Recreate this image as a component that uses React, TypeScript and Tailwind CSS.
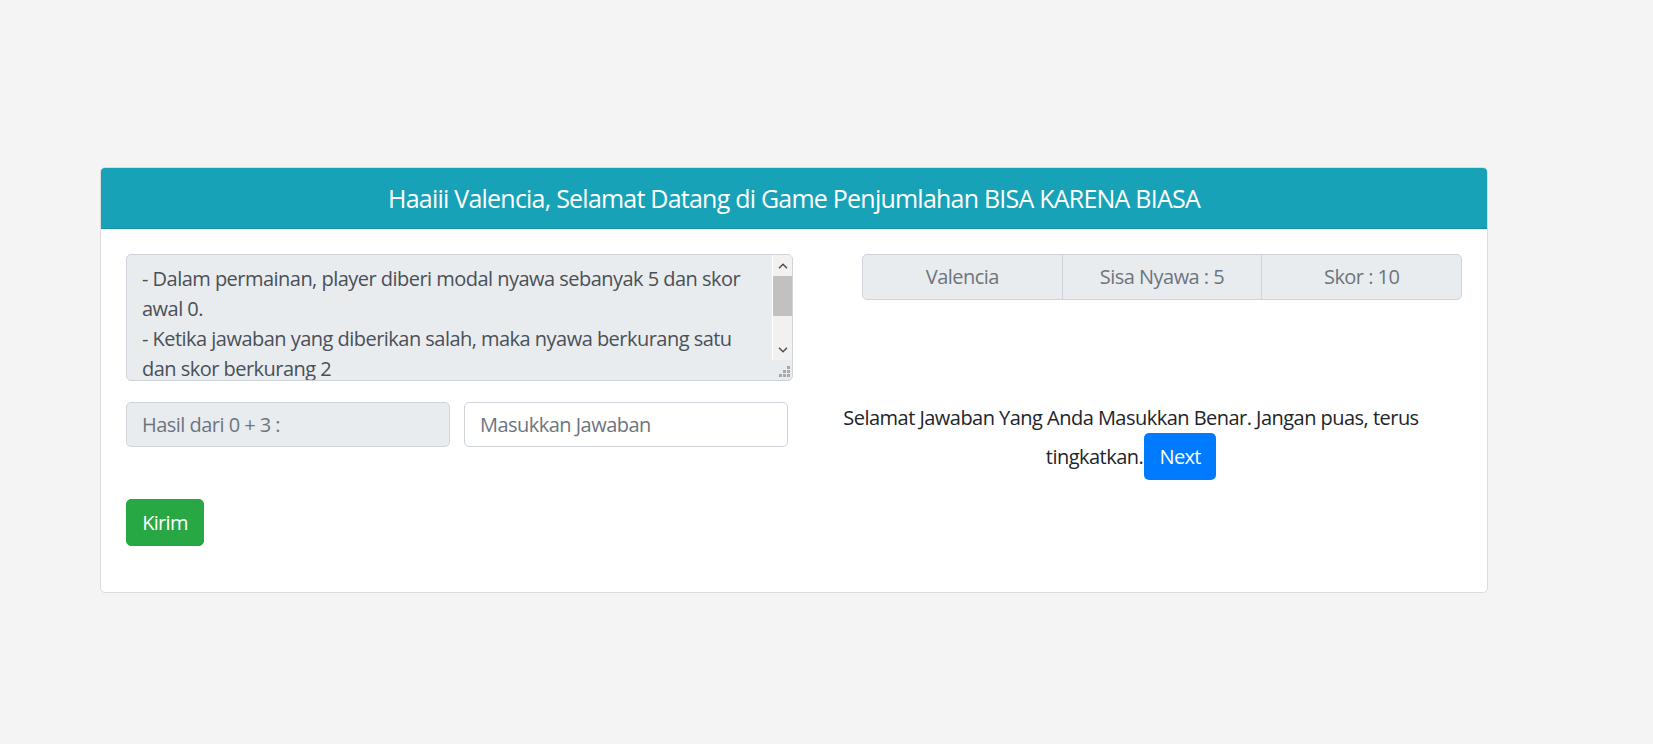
import React from "react";

const font = { fontFamily: '"Open Sans", "Noto Sans", sans-serif' };

function Scrollbar() {
  return (
    <div className="flex w-[20px] shrink-0 flex-col">
      <div className="flex h-[105px] flex-col border-l border-white bg-[#f1f1f1]">
        <div className="flex h-[21px] items-center justify-center">
          <svg width="10" height="6" viewBox="0 0 10 6">
            <path d="M1 5.2 L5 1.2 L9 5.2" fill="none" stroke="#505050" strokeWidth="1.5" />
          </svg>
        </div>
        <div className="h-[40px] bg-[#c1c1c1]" />
        <div className="flex-1" />
        <div className="flex h-[21px] items-center justify-center">
          <svg width="10" height="6" viewBox="0 0 10 6">
            <path d="M1 0.8 L5 4.8 L9 0.8" fill="none" stroke="#505050" strokeWidth="1.5" />
          </svg>
        </div>
      </div>
      <div className="flex flex-1 items-end justify-end pb-[3px] pr-[2px]">
        <svg width="11" height="11" viewBox="0 0 11 11">
          <rect x="8" y="0" width="3" height="3" fill="#a8a8a8" />
          <rect x="4" y="4" width="3" height="3" fill="#a8a8a8" />
          <rect x="8" y="4" width="3" height="3" fill="#a8a8a8" />
          <rect x="0" y="8" width="3" height="3" fill="#a8a8a8" />
          <rect x="4" y="8" width="3" height="3" fill="#a8a8a8" />
          <rect x="8" y="8" width="3" height="3" fill="#a8a8a8" />
        </svg>
      </div>
    </div>
  );
}

export default function App() {
  return (
    <div className="min-h-[744px] bg-[#f4f4f4] pl-[100px] pt-[167px] tracking-[-0.033em]" style={font}>
      <div className="w-[1388px] overflow-hidden rounded-[5px] border border-[#dcdcdc] bg-white">
        <div className="flex h-[61px] items-center justify-center border-b border-[#1490a3] bg-[#17a2b8] text-[25px] leading-[30px] tracking-[-0.031em] text-white">
          Haaiii Valencia, Selamat Datang di Game Penjumlahan BISA KARENA BIASA
        </div>
        <div className="flex gap-[7px] px-[25px] pb-[46px] pt-[25px]">
          {/* Left column */}
          <div className="flex w-[667px] flex-col">
            <div className="flex h-[127px] overflow-hidden rounded-[5px] border border-[#ced4da] bg-[#e9ecef]">
              <div className="flex-1 overflow-hidden whitespace-nowrap pl-[15px] pt-[9px] text-[20px] leading-[30px] text-[#495057]">
                <div>- Dalam permainan, player diberi modal nyawa sebanyak 5 dan skor</div>
                <div>awal 0.</div>
                <div>- Ketika jawaban yang diberikan salah, maka nyawa berkurang satu</div>
                <div>dan skor berkurang 2</div>
                <div>- Ketika jawaban yang diberikan benar, maka skor bertambah 10</div>
              </div>
              <Scrollbar />
            </div>
            <div className="mt-[21px] flex gap-[14px]">
              <div className="flex h-[45px] w-[324px] items-center rounded-[5px] border border-[#ced4da] bg-[#e9ecef] px-[15px] text-[20px] text-[#6c757d]">
                Hasil dari 0 + 3 :
              </div>
              <div className="flex h-[45px] w-[324px] items-center rounded-[5px] border border-[#ced4da] bg-white px-[15px] text-[20px] text-[#6c757d]">
                Masukkan Jawaban
              </div>
            </div>
            <div className="mt-[52px]">
              <button className="h-[47px] w-[78px] rounded-[5px] border border-[#28a745] bg-[#28a745] text-[20px] tracking-[-0.033em] text-white">
                Kirim
              </button>
            </div>
          </div>
          {/* Right column */}
          <div className="flex w-[662px] flex-col">
            <div className="flex justify-end">
              <div className="flex h-[46px] w-[600px] overflow-hidden rounded-[5px] border border-[#ced4da] bg-[#e9ecef] text-[20px] text-[#6c757d]">
                <div className="flex flex-1 items-center justify-center">Valencia</div>
                <div className="flex flex-1 items-center justify-center border-l border-[#ced4da]">Sisa Nyawa : 5</div>
                <div className="flex flex-1 items-center justify-center border-l border-[#ced4da]">Skor : 10</div>
              </div>
            </div>
            <div className="mt-[103px] text-center text-[20px] leading-[30px] text-[#212529]">
              Selamat Jawaban Yang Anda Masukkan Benar. Jangan puas, terus
              <br />
              tingkatkan.
              <button className="ml-[1px] inline-block h-[47px] w-[72px] rounded-[5px] bg-[#007bff] align-baseline text-[20px] leading-[30px] tracking-[-0.033em] text-white">
                Next
              </button>
            </div>
          </div>
        </div>
      </div>
    </div>
  );
}
